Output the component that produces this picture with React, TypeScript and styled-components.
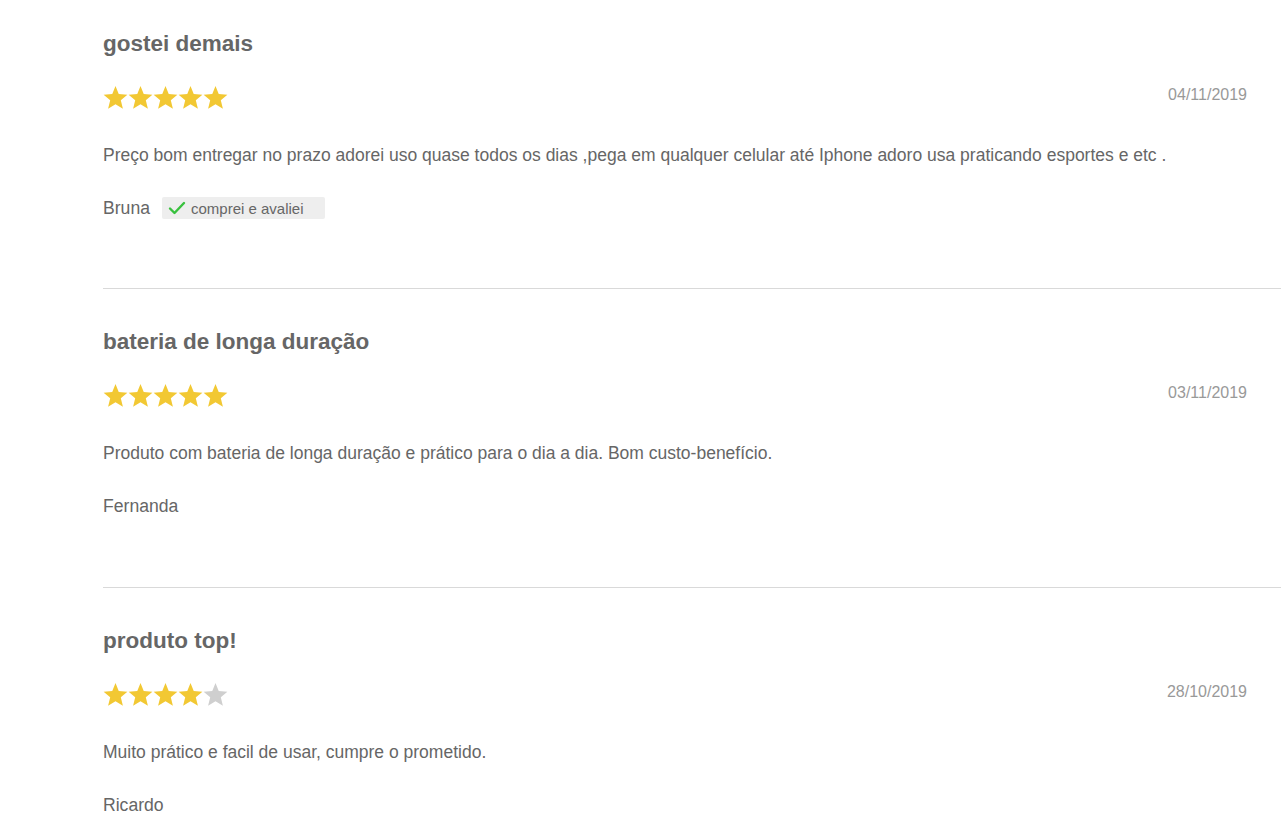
import React from "react";
import styled, { createGlobalStyle } from "styled-components";

const Global = createGlobalStyle`
  html, body { margin: 0; padding: 0; background: #fff; }
  body { font-family: "Liberation Sans", Arial, sans-serif; color: #666; }
`;

const Page = styled.div`
  padding-left: 103px;
  overflow: hidden;
`;

const Review = styled.section<{ $first?: boolean }>`
  border-top: ${(p) => (p.$first ? "none" : "1px solid #d9d9d9")};
  padding: ${(p) => (p.$first ? "31px 34px 69px 0" : "40px 34px 70px 0")};
`;

const Title = styled.h3`
  margin: 0;
  font-size: 22.5px;
  line-height: 26px;
  font-weight: bold;
  color: #666;
`;

const RatingRow = styled.div`
  display: flex;
  justify-content: space-between;
  align-items: flex-start;
  margin-top: 29px;
`;

const Stars = styled.div`
  display: flex;
  gap: 0;
  height: 25px;
  margin-top: -1px;
`;

const DateText = styled.span`
  font-size: 16px;
  line-height: 18px;
  color: #999;
`;

const Body = styled.p`
  margin: 35px 0 0;
  font-size: 17.5px;
  line-height: 20px;
  color: #666;
`;

const AuthorRow = styled.div`
  display: flex;
  align-items: center;
  gap: 12px;
  height: 22px;
  margin-top: 32px;
  font-size: 17.6px;
  color: #666;
`;

const Badge = styled.span`
  display: inline-flex;
  align-items: center;
  gap: 5px;
  height: 22px;
  padding: 0 21px 0 6px;
  background: #eeeeee;
  border-radius: 2px;
  font-size: 15px;
  color: #666;
`;

const Star = ({ filled }: { filled: boolean }) => (
  <svg width="25" height="25" viewBox="0 0 24 24">
    <polygon
      points="12,1 15.1,8.6 23.4,9.3 17.1,14.7 19.1,22.8 12,18.5 4.9,22.8 6.9,14.7 0.6,9.3 8.9,8.6"
      fill={filled ? "#f2c833" : "#cfcfcf"}
    />
  </svg>
);

const Check = () => (
  <svg width="18" height="14" viewBox="0 0 18 14">
    <path d="M2 7.5 L6.5 12 L16 2" fill="none" stroke="#39c13f" strokeWidth="2.4" strokeLinecap="round" strokeLinejoin="round" />
  </svg>
);

type R = { title: string; stars: number; date: string; body: string; author: string; verified?: boolean };

const reviews: R[] = [
  {
    title: "gostei demais",
    stars: 5,
    date: "04/11/2019",
    body: "Preço bom entregar no prazo adorei uso quase todos os dias ,pega em qualquer celular até Iphone adoro usa praticando esportes e etc .",
    author: "Bruna",
    verified: true,
  },
  {
    title: "bateria de longa duração",
    stars: 5,
    date: "03/11/2019",
    body: "Produto com bateria de longa duração e prático para o dia a dia. Bom custo-benefício.",
    author: "Fernanda",
  },
  {
    title: "produto top!",
    stars: 4,
    date: "28/10/2019",
    body: "Muito prático e facil de usar, cumpre o prometido.",
    author: "Ricardo",
  },
];

export default function App() {
  return (
    <>
      <Global />
      <Page>
        {reviews.map((r, i) => (
          <Review key={i} $first={i === 0}>
            <Title>{r.title}</Title>
            <RatingRow>
              <Stars>
                {[0, 1, 2, 3, 4].map((s) => (
                  <Star key={s} filled={s < r.stars} />
                ))}
              </Stars>
              <DateText>{r.date}</DateText>
            </RatingRow>
            <Body>{r.body}</Body>
            <AuthorRow>
              <span>{r.author}</span>
              {r.verified && (
                <Badge>
                  <Check />
                  comprei e avaliei
                </Badge>
              )}
            </AuthorRow>
          </Review>
        ))}
      </Page>
    </>
  );
}
